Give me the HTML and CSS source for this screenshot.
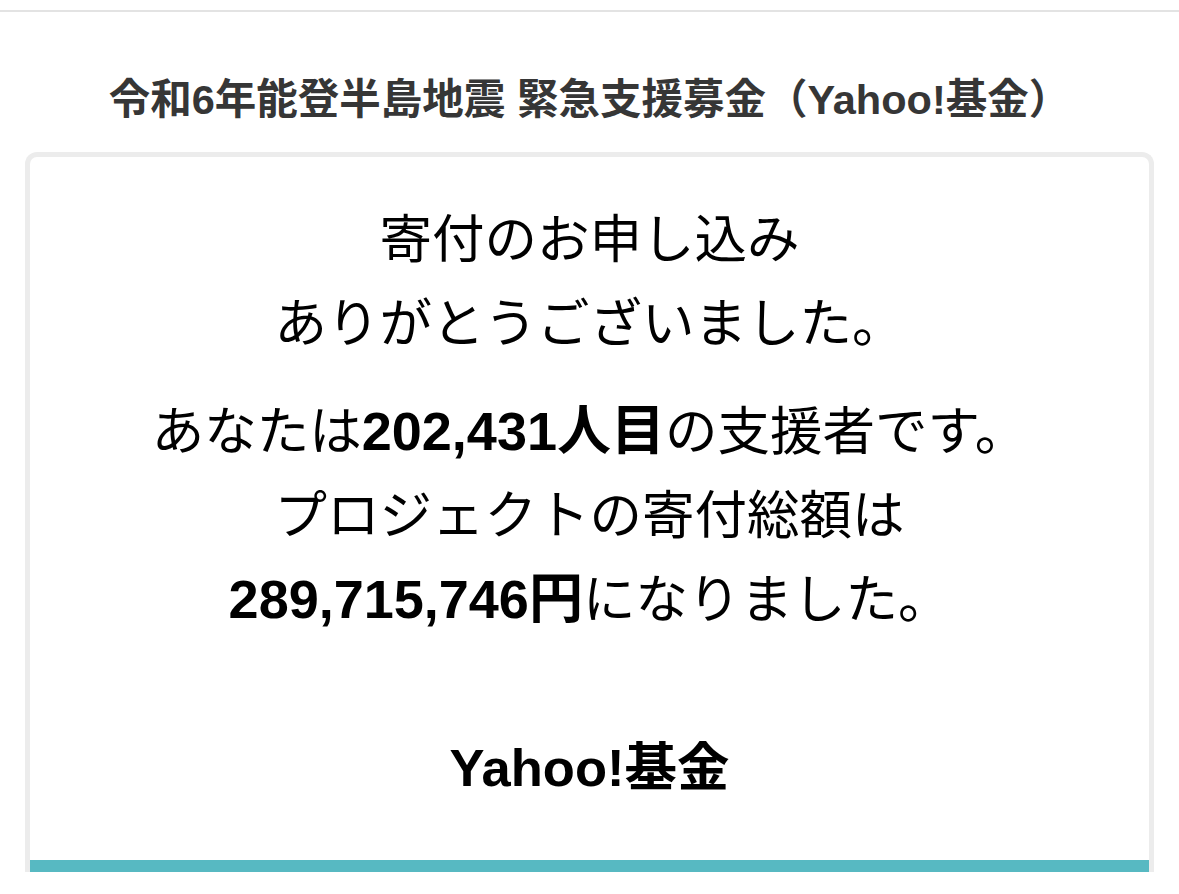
FILE: index.html
```html
<!DOCTYPE html>
<html lang="ja">
<head>
<meta charset="utf-8">
<title>寄付のお申し込み</title>
<link rel="stylesheet" href="styles.css">
</head>
<body>
<div class="top-rule"></div>
<h1 class="project-title">令和6年能登半島地震 緊急支援募金（Yahoo!基金）</h1>
<section class="card">
  <div class="card-body">
    <p class="msg">寄付のお申し込み<br>ありがとうございました。</p>
    <p class="msg msg-stats">あなたは<b>202,431人目</b>の支援者です。<br>プロジェクトの寄付総額は<br><b>289,715,746円</b>になりました。</p>
    <p class="brand">Yahoo!基金</p>
  </div>
  <div class="card-accent"></div>
</section>
</body>
</html>
```
FILE: styles.css
```css
html, body {
  margin: 0;
  padding: 0;
  background: #ffffff;
}

body {
  font-family: "Liberation Sans", "Noto Sans CJK JP", sans-serif;
  color: #000;
}

.top-rule {
  margin-top: 10px;
  height: 2px;
  background: #e3e3e3;
}

.project-title {
  margin: 60px 0 24px;
  font-size: 41.5px;
  line-height: 56px;
  font-weight: 700;
  color: #363636;
  text-align: center;
}

.card {
  margin: 0 25px;
  border: 5px solid #ececec;
  border-bottom: none;
  border-radius: 12px 12px 0 0;
  background: #fff;
  display: flex;
  flex-direction: column;
}

.card-body {
  padding: 41px 0 50px;
  text-align: center;
}

.msg {
  margin: 0;
  font-size: 52.5px;
  line-height: 84px;
  font-weight: 400;
}

.msg-stats {
  margin-top: 24px;
}

.msg b {
  font-weight: 700;
  font-size: 54px;
  line-height: 1;
}

.brand {
  margin: 84px 0 0;
  font-size: 52.5px;
  line-height: 84px;
  font-weight: 700;
}

.card-accent {
  height: 12px;
  background: #57b9c2;
}
```
